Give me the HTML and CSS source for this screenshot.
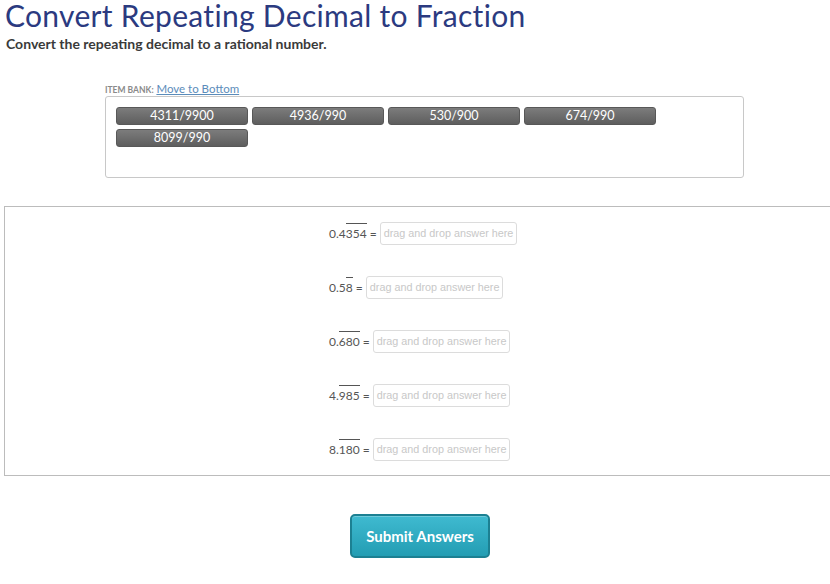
FILE: index.html
```html
<!DOCTYPE html>
<html>
<head>
<meta charset="utf-8">
<link rel="stylesheet" href="styles.css">
</head>
<body>
<h1 class="title">Convert Repeating Decimal to Fraction</h1>
<p class="subtitle">Convert the repeating decimal to a rational number.</p>

<div class="bank">
  <div class="bank-label"><span class="bank-caps">ITEM BANK:</span> <a class="bank-link" href="#">Move to Bottom</a></div>
  <div class="bank-box">
    <div class="chip">4311/9900</div>
    <div class="chip">4936/990</div>
    <div class="chip">530/900</div>
    <div class="chip">674/990</div>
    <div class="chip">8099/990</div>
  </div>
</div>

<div class="answers">
  <div class="rows">
    <div class="row"><span class="num">0.4<span class="rep">354</span> =</span><span class="drop">drag and drop answer here</span></div>
    <div class="row"><span class="num">0.5<span class="rep">8</span> =</span><span class="drop">drag and drop answer here</span></div>
    <div class="row"><span class="num">0.<span class="rep">680</span> =</span><span class="drop">drag and drop answer here</span></div>
    <div class="row"><span class="num">4.<span class="rep">985</span> =</span><span class="drop">drag and drop answer here</span></div>
    <div class="row"><span class="num">8.<span class="rep">180</span> =</span><span class="drop">drag and drop answer here</span></div>
  </div>
</div>

<div class="submit-wrap">
  <button class="submit">Submit Answers</button>
</div>
</body>
</html>
```

FILE: styles.css
```css
html, body {
  margin: 0;
  padding: 0;
  background: #fff;
}
body {
  font-family: "Lato", "Open Sans", sans-serif;
  color: #333;
  width: 830px;
  height: 584px;
  overflow: hidden;
}
.title {
  margin: 0;
  padding: 0 0 0 5px;
  font-family: "Lato", sans-serif;
  font-weight: 400;
  font-size: 30px;
  line-height: 30px;
  color: #2b3a80;
  letter-spacing: 0.3px;
  white-space: nowrap;
}
.subtitle {
  margin: 6px 0 0 6px;
  font-size: 14px;
  line-height: 16px;
  font-weight: 700;
  color: #3a3a3a;
}
.bank {
  margin: 28px 0 0 105px;
  width: 639px;
}
.bank-label {
  font-size: 11px;
  line-height: 14px;
  height: 14px;
  padding-top: 2px;
  padding-bottom: 0;
}
.bank-caps {
  font-size: 8.5px;
  font-weight: 700;
  color: #8a8a8a;
}
.bank-link {
  color: #5b8cba;
  font-size: 11.5px;
  text-decoration: underline;
}
.bank-box {
  border: 1px solid #c8c8c8;
  border-radius: 3px;
  box-sizing: border-box;
  height: 82px;
  padding: 10px 10px;
  display: flex;
  flex-wrap: wrap;
  align-content: flex-start;
  gap: 4px 4px;
}
.chip {
  width: 132px;
  height: 18px;
  box-sizing: border-box;
  background: linear-gradient(#7c7c7c, #5e5e5e);
  border: 1px solid #585858;
  border-radius: 3px;
  color: #fff;
  font-size: 12.5px;
  line-height: 16px;
  text-align: center;
}
.answers {
  margin: 28px 0 0 4px;
  border: 1px solid #bcbcbc;
  border-right: none;
  height: 270px;
  box-sizing: border-box;
}
.rows {
  padding: 15px 0 0 324px;
  display: flex;
  flex-direction: column;
  gap: 31px;
}
.row {
  display: flex;
  align-items: center;
  height: 23px;
}
.num {
  font-size: 12px;
  color: #555;
  margin-right: 3px;
}
.rep {
  border-top: 1px solid #555;
  padding-top: 2px;
}
.drop {
  display: inline-block;
  height: 23px;
  box-sizing: border-box;
  border: 1px solid #dcdcdc;
  border-radius: 3px;
  padding: 0 3px;
  font-family: "Liberation Sans", Arial, sans-serif;
  font-size: 10.8px;
  line-height: 21px;
  color: #c8c8c8;
  white-space: nowrap;
}
.submit-wrap {
  display: flex;
  justify-content: center;
  padding-top: 38px;
  padding-left: 10px;
}
.submit {
  width: 140px;
  height: 44px;
  border: 2px solid #1c8092;
  border-radius: 5px;
  background: linear-gradient(#3fbad0, #239db3);
  color: #fff;
  font-family: "Lato", sans-serif;
  font-weight: 700;
  font-size: 15px;
  padding: 0;
  box-shadow: inset 0 1px 0 rgba(255,255,255,0.25);
}
```
